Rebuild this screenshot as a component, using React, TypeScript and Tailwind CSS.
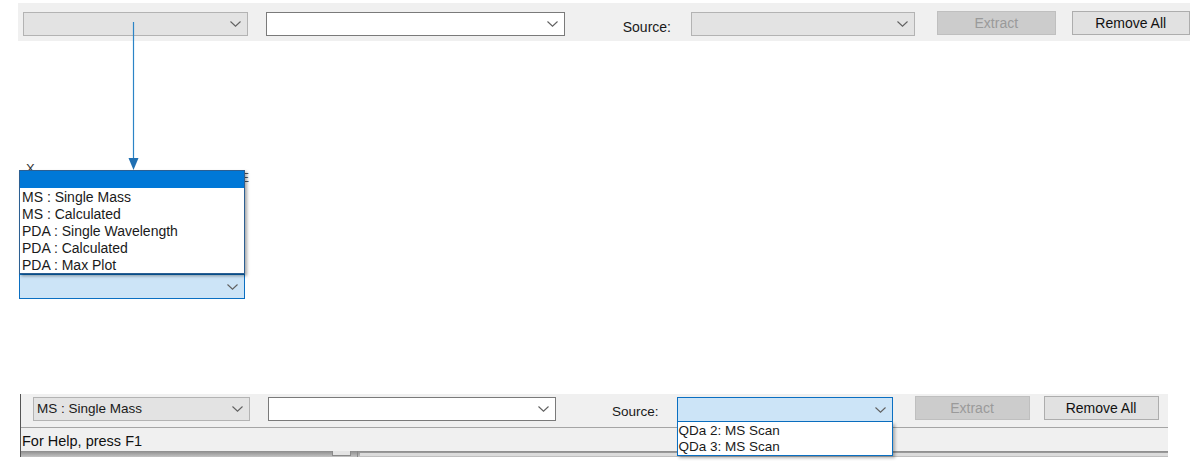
import React from 'react'

function Chevron({ className = '' }: { className?: string }) {
  return (
    <svg width="11" height="6" viewBox="0 0 11 6" className={className}>
      <polyline points="0.5,0.5 5.5,5.2 10.5,0.5" fill="none" stroke="#606060" strokeWidth="1.1" />
    </svg>
  )
}

function Combo({
  w,
  text,
  tone = 'gray',
  className = '',
}: {
  w: string
  text?: string
  tone?: 'gray' | 'white' | 'focus'
  className?: string
}) {
  const tones = {
    gray: 'bg-[#e3e3e3] border-[#b3b3b3]',
    white: 'bg-white border-[#7a7a7a]',
    focus: 'bg-[#cce4f7] border-[#0a6fc2]',
  }
  return (
    <div className={`${w} h-[24px] border flex items-center justify-between pl-[3px] pr-[6px] ${tones[tone]} ${className}`}>
      <span className="text-[13.5px] text-[#1a1a1a] leading-none">{text}</span>
      <Chevron />
    </div>
  )
}

function Btn({ label, disabled, className = '' }: { label: string; disabled?: boolean; className?: string }) {
  return (
    <div
      className={`h-[24px] border flex items-center justify-center text-[14px] leading-none ${
        disabled ? 'bg-[#cccccc] border-[#bfbfbf] text-[#9a9a9a]' : 'bg-[#e1e1e1] border-[#adadad] text-[#111]'
      } ${className}`}
    >
      {label}
    </div>
  )
}

export default function App() {
  const items = ['MS : Single Mass', 'MS : Calculated', 'PDA : Single Wavelength', 'PDA : Calculated', 'PDA : Max Plot']

  return (
    <div
      className="relative w-[1200px] h-[475px] bg-white overflow-hidden"
      style={{ fontFamily: '"Liberation Sans", Arial, sans-serif' }}
    >
      {/* top toolbar strip */}
      <div className="mt-[3px] ml-[18px] w-[1172px] h-[38px] bg-[#f0f0f0] flex items-start pt-[9px]">
        <Combo w="w-[226px]" className="ml-[5px]" />
        <Combo w="w-[300px]" tone="white" className="ml-[18px]" />
        <span className="ml-[58px] mt-[8px] text-[14px] text-[#1a1a1a] leading-none">Source:</span>
        <Combo w="w-[225px]" className="ml-[20px]" />
        <Btn label="Extract" disabled className="ml-[22px] w-[119px] -mt-[1px]" />
        <Btn label="Remove All" className="ml-[16px] w-[119px] -mt-[1px]" />
      </div>

      {/* connector arrow */}
      <svg className="absolute left-[127px] top-[20px]" width="14" height="152" viewBox="0 0 14 152">
        <line x1="6.5" y1="2" x2="6.5" y2="140" stroke="#2b84c6" strokeWidth="1.2" />
        <polygon points="1.5,138 11.5,138 6.5,150" fill="#1f6fb2" />
      </svg>

      {/* opened drop-down illustration */}
      <div className="relative mt-[129px] ml-[19px] w-[226px]">
        <span className="absolute -top-[8px] left-[7px] text-[13px] text-[#333] leading-none">X</span>
        <span className="absolute top-[2px] -right-[4px] text-[12px] text-[#555] leading-none">E</span>
        <div className="relative border border-[#2c5f92] bg-white shadow-[2px_2px_3px_rgba(0,0,0,0.35)]">
          <div className="h-[17px] bg-[#0078d7]" />
          {items.map((t) => (
            <div key={t} className="h-[17px] flex items-center pl-[2px] text-[14px] text-[#1a1a1a] leading-none">
              {t}
            </div>
          ))}
        </div>
        <Combo w="w-[226px]" tone="focus" className="h-[25px]" />
      </div>

      {/* bottom window fragment */}
      <div className="mt-[95px] ml-[20px] w-[1148px] border-l border-[#555] bg-[#f0f0f0]">
        <div className="relative h-[34px] flex items-start pt-[3px] border-b border-[#a5a5a5]">
          <Combo w="w-[217px]" text="MS : Single Mass" className="ml-[12px]" />
          <Combo w="w-[288px]" tone="white" className="ml-[18px]" />
          <span className="ml-[56px] mt-[8px] text-[13.5px] text-[#1a1a1a] leading-none">Source:</span>
          <div className="relative ml-[18px]">
            <Combo w="w-[216px]" tone="focus" className="h-[25px]" />
            <div className="absolute left-0 top-[25px] w-[216px] h-[34px] pt-[1px] bg-white border border-[#0a6fc2] border-t-0 shadow-[2px_2px_3px_rgba(0,0,0,0.3)] z-10">
              {['QDa 2: MS Scan', 'QDa 3: MS Scan'].map((t) => (
                <div key={t} className="h-[16px] flex items-center pl-[1px] text-[13.5px] text-[#1a1a1a] leading-none">
                  {t}
                </div>
              ))}
            </div>
          </div>
          <Btn label="Extract" disabled className="ml-[22px] w-[115px] -mt-[1px]" />
          <Btn label="Remove All" className="ml-[14px] w-[115px] -mt-[1px]" />
        </div>
        <div className="h-[23px] flex items-center pl-[1px] pt-[3px] text-[14.5px] text-[#111] leading-none">For Help, press F1</div>
        <div className="h-[6px] bg-gradient-to-b from-[#8c8c8c] to-[#c4c4c4] flex">
          <div className="ml-[311px] w-[19px] h-[5px] bg-[#e4e4e4] border border-t-0 border-[#8a8a8a]" />
          <div className="ml-[6px] w-[1px] h-[6px] bg-[#888]" />
          <div className="ml-[2px] flex-1 h-[3px] mt-[2px] bg-[#dcdcdc]" />
        </div>
      </div>
    </div>
  )
}
